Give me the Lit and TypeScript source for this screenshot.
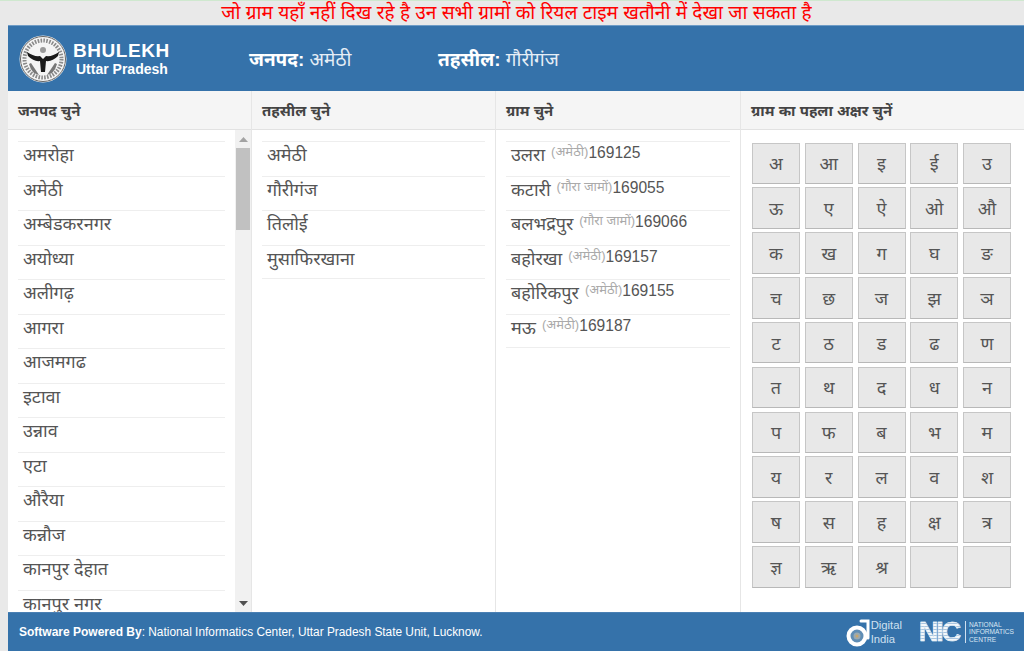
import { LitElement, html, css } from "lit";
import { customElement } from "lit/decorators.js";

const districts = ["अमरोहा","अमेठी","अम्बेडकरनगर","अयोध्या","अलीगढ़","आगरा","आजमगढ","इटावा","उन्नाव","एटा","औरैया","कन्नौज","कानपुर देहात","कानपुर नगर"];
const tehsils = ["अमेठी","गौरीगंज","तिलोई","मुसाफिरखाना"];
const villages = [["उलरा","(अमेठी)","169125"],["कटारी","(गौरा जामों)","169055"],["बलभद्रपुर","(गौरा जामों)","169066"],["बहोरखा","(अमेठी)","169157"],["बहोरिकपुर","(अमेठी)","169155"],["मऊ","(अमेठी)","169187"]];
const letters = ["अ","आ","इ","ई","उ","ऊ","ए","ऐ","ओ","औ","क","ख","ग","घ","ङ","च","छ","ज","झ","ञ","ट","ठ","ड","ढ","ण","त","थ","द","ध","न","प","फ","ब","भ","म","य","र","ल","व","श","ष","स","ह","क्ष","त्र","ज्ञ","ऋ","श्र","",""];

@customElement("app-root")
export class AppRoot extends LitElement {
  static styles = css`
    :host { display: block; height: 651px; overflow: hidden; background: #e9e9e9; font-family: "Liberation Sans", "Noto Sans", sans-serif; color: #444; box-sizing: border-box; border-top: 1px solid #cfe8cf; }
    .notice { height: 24px; line-height: 23px; text-align: center; color: #f00; font-size: 19.1px; white-space: nowrap; padding-left: 9px; }
    .shell { margin-left: 8px; height: 626px; display: flex; flex-direction: column; background: #fff; }
    .head { height: 66px; flex: none; background: #3572aa; color: #fff; display: flex; align-items: center; border-top: 1px solid #6f9cc6; box-sizing: border-box; }
    .logo { margin-left: 11px; width: 48px; height: 48px; flex: none; }
    .brand { margin-left: 6px; width: 176px; flex: none; font-weight: 700; }
    .brand .a { font-size: 19px; line-height: 21px; letter-spacing: .55px; }
    .brand .b { font-size: 14px; line-height: 16px; margin-left: 3px; }
    .loc { font-size: 19px; white-space: nowrap; color: #e6eef6; }
    .loc b { font-weight: 700; color: #fff; font-size: 19px; }
    .loc.one { width: 189px; }
    .cols { flex: 1; min-height: 0; display: grid; grid-template-columns: 244px 244px 245px 283px; }
    .col { display: flex; flex-direction: column; min-height: 0; min-width: 0; border-right: 1px solid #e6e6e6; }
    .col:last-child { border-right: 0; }
    .title { height: 39px; flex: none; box-sizing: border-box; background: #f5f5f5; border-bottom: 1px solid #e2e2e2; padding: 0 10px; line-height: 40px; font-weight: 700; font-size: 15px; color: #444; }
    .body { flex: 1; min-height: 0; display: flex; overflow: hidden; }
    .list { flex: 1; min-width: 0; padding: 11px 10px 0; margin: 0; list-style: none; }
    .list li { height: 34.5px; box-sizing: border-box; border-top: 1px solid #eee; padding-left: 5px; font-size: 18px; line-height: 26px; white-space: nowrap; color: #555; }
    .list li:last-child { border-bottom: 1px solid #eee; }
    .list.clip li:last-child { border-bottom: 0; }
    .sub { font-size: 13px; color: #aaa; position: relative; top: -5px; margin-left: 6px; }
    .num { font-size: 15.6px; color: #555; position: relative; top: -3px; }
    .bar { width: 16px; flex: none; background: #f1f1f1; position: relative; display: flex; flex-direction: column; align-items: center; }
    .arrow { height: 18px; flex: none; display: flex; align-items: center; justify-content: center; }
    .thumb { width: 14px; height: 82px; background: #c1c1c1; }
    .spacer { flex: 1; }
    .grid { flex: 1; padding: 12.5px 13px 0 11px; display: grid; grid-template-columns: repeat(5, 48px); column-gap: 4.75px; grid-auto-rows: 41.5px; row-gap: 3.35px; align-content: start; }
    .key { box-sizing: border-box; border: 1px solid #c6c6c6; border-bottom-color: #b8b8b8; background: #e8e8e8; display: flex; align-items: center; justify-content: center; font-size: 18px; color: #555; }
    .foot { height: 39px; flex: none; background: #3572aa; color: #fff; display: flex; align-items: center; font-size: 11.87px; padding-left: 11px; border-top: 1px solid #4a80b4; box-sizing: border-box; position: relative; }
    .foot b { font-size: 12px; }
    .foot .grow { flex: 1; }
    .di { display: flex; align-items: flex-start; gap: 0; margin-right: 17px; }
    .di svg { margin-right: -1px; }
    .di .t { font-size: 11.3px; line-height: 14px; color: #cfe0f0; }
    .nic { display: flex; align-items: center; gap: 4px; margin-right: 10px; }
    .nic .t { border-left: 1px solid #cfe0f0; padding-left: 3px; font-size: 6.6px; line-height: 7.5px; color: #dbe7f3; white-space: nowrap; }
    .nic .mark { font-size: 27px; font-weight: 700; line-height: 22px; letter-spacing: -2.2px; width: 42px; color: transparent; -webkit-text-stroke: .5px #dfe9f3; background: repeating-linear-gradient(180deg, #f4f8fb 0 2px, #a9c5e0 2px 3px); -webkit-background-clip: text; background-clip: text; }
  `;

  logo() {
    return html`<svg class="logo" viewBox="0 0 48 48">
      <circle cx="24" cy="24" r="23.5" fill="#f4f4f4"/>
      <circle cx="24" cy="24" r="22.5" fill="none" stroke="#666" stroke-width="1"/>
      <circle cx="24" cy="24" r="18.5" fill="none" stroke="#8a8a8a" stroke-width="4" stroke-dasharray="1.6 1.3"/>
      <path d="M12 28 q4 6 8 12 l-5 -2 q-4 -4 -5 -9 Z M36 28 q-4 6 -8 12 l5 -2 q4 -4 5 -9 Z" fill="#777"/>
      <path d="M8 17 Q15 22 21 21 L24 24 L27 21 Q33 22 40 17 L39 21 Q33 27 27 26 L26 37 L22 37 L21 26 Q15 27 9 21 Z" fill="#1a1a1a"/>
      <circle cx="24" cy="15" r="3" fill="#999"/>
    </svg>`;
  }

  render() {
    return html`
      <div class="notice">जो ग्राम यहाँ नहीं दिख रहे है उन सभी ग्रामों को रियल टाइम खतौनी में देखा जा सकता है</div>
      <div class="shell">
        <header class="head">
          ${this.logo()}
          <div class="brand"><div class="a">BHULEKH</div><div class="b">Uttar Pradesh</div></div>
          <div class="loc one"><b>जनपद:</b> अमेठी</div>
          <div class="loc"><b>तहसील:</b> गौरीगंज</div>
        </header>
        <div class="cols">
          <section class="col">
            <div class="title">जनपद चुने</div>
            <div class="body">
              <ul class="list clip">${districts.map((d) => html`<li>${d}</li>`)}</ul>
              <div class="bar">
                <div class="arrow"><svg width="9" height="5"><path d="M0 5 L4.5 0 L9 5Z" fill="#a3a3a3"/></svg></div>
                <div class="thumb"></div>
                <div class="spacer"></div>
                <div class="arrow"><svg width="9" height="5"><path d="M0 0 L4.5 5 L9 0Z" fill="#505050"/></svg></div>
              </div>
            </div>
          </section>
          <section class="col">
            <div class="title">तहसील चुने</div>
            <div class="body"><ul class="list">${tehsils.map((d) => html`<li>${d}</li>`)}</ul></div>
          </section>
          <section class="col">
            <div class="title">ग्राम चुने</div>
            <div class="body"><ul class="list">${villages.map((v) => html`<li>${v[0]}<span class="sub">${v[1]}</span><span class="num">${v[2]}</span></li>`)}</ul></div>
          </section>
          <section class="col">
            <div class="title">ग्राम का पहला अक्षर चुनें</div>
            <div class="body"><div class="grid">${letters.map((l) => html`<div class="key">${l}</div>`)}</div></div>
          </section>
        </div>
        <footer class="foot">
          <div><b>Software Powered By</b>: National Informatics Center, Uttar Pradesh State Unit, Lucknow.</div>
          <div class="grow"></div>
          <div class="di">
            <svg width="26" height="29" viewBox="0 0 26 29"><path d="M15 3 h7 v17" stroke="#fff" stroke-width="3" fill="none" stroke-linecap="round"/><circle cx="11" cy="18" r="8.5" fill="#5f8db5" stroke="#fff" stroke-width="4"/><circle cx="11" cy="18" r="3.5" fill="#9aa9b0"/><circle cx="11" cy="18" r="1.5" fill="#c9a66b"/></svg>
            <div class="t">Digital<br>India</div>
          </div>
          <div class="nic"><div class="mark">NIC</div><div class="t">NATIONAL<br>INFORMATICS<br>CENTRE</div></div>
        </footer>
      </div>
    `;
  }
}
